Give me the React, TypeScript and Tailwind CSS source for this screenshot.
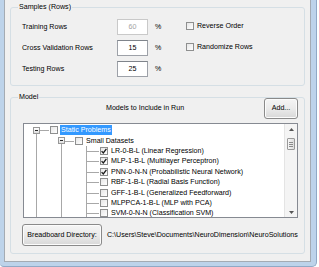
import type { ReactNode } from "react";

type TreeRow = {
  level: number;
  label: string;
  kind: "root" | "branch" | "leaf";
  checked?: boolean;
  selected?: boolean;
};

const rows: TreeRow[] = [
  { level: 0, label: "Static Problems", kind: "root", selected: true },
  { level: 1, label: "Small Datasets", kind: "branch" },
  { level: 2, label: "LR-0-B-L (Linear Regression)", kind: "leaf", checked: true },
  { level: 2, label: "MLP-1-B-L (Multilayer Perceptron)", kind: "leaf", checked: true },
  { level: 2, label: "PNN-0-N-N (Probabilistic Neural Network)", kind: "leaf", checked: true },
  { level: 2, label: "RBF-1-B-L (Radial Basis Function)", kind: "leaf" },
  { level: 2, label: "GFF-1-B-L (Generalized Feedforward)", kind: "leaf" },
  { level: 2, label: "MLPPCA-1-B-L (MLP with PCA)", kind: "leaf" },
  { level: 2, label: "SVM-0-N-N (Classification SVM)", kind: "leaf" },
];

function Check({ checked }: { checked?: boolean }) {
  return (
    <div className="w-[8px] h-[8px] shrink-0 border border-[#8e8f8f] bg-linear-to-br from-[#e6e6e6] to-white flex items-center justify-center">
      {checked && (
        <svg width="6" height="6" viewBox="0 0 6 6">
          <path d="M0.6 3.1 L2.3 4.9 L5.4 0.8" fill="none" stroke="#1c1c1c" strokeWidth="1.3" />
        </svg>
      )}
    </div>
  );
}

function Cell({
  up,
  down,
  across,
  expander,
}: {
  up?: boolean;
  down?: boolean;
  across?: boolean;
  expander?: boolean;
}) {
  return (
    <div className="relative w-[25px] h-full shrink-0">
      {up && <div className="absolute left-[12px] top-0 h-1/2 border-l border-[#a8a8a8]" />}
      {down && <div className="absolute left-[12px] top-1/2 bottom-0 border-l border-[#a8a8a8]" />}
      {across && <div className="absolute left-[12px] right-0 top-1/2 border-t border-[#a8a8a8]" />}
      {expander && (
        <div className="absolute left-[9px] top-1/2 -mt-[3.5px] w-[7px] h-[7px] border border-[#979797] bg-linear-to-b from-white to-[#dedede] flex items-center justify-center">
          <div className="w-[3px] border-t border-[#2a2a2a]" />
        </div>
      )}
    </div>
  );
}

function Row({ row }: { row: TreeRow }) {
  let cells: ReactNode;
  if (row.kind === "root") {
    cells = <Cell down across expander />;
  } else if (row.kind === "branch") {
    cells = (
      <>
        <Cell up down />
        <Cell down across expander />
      </>
    );
  } else {
    cells = (
      <>
        <Cell up down />
        <Cell up down />
        <Cell up down across />
      </>
    );
  }
  return (
    <div className="flex items-center h-[10.4px] whitespace-nowrap">
      {cells}
      <div className="ml-[1px]">
        <Check checked={row.checked} />
      </div>
      <span
        className={
          row.selected
            ? "ml-[2px] px-[1px] leading-[10px] bg-[#3399ff] text-white"
            : "ml-[2px] px-[1px] leading-[10px] text-black"
        }
      >
        {row.label}
      </span>
    </div>
  );
}

function Button({ children, className }: { children: ReactNode; className: string }) {
  return (
    <div
      className={
        "flex items-center justify-center rounded-[3px] border border-[#8a8a8a] bg-linear-to-b from-[#f5f5f5] via-[#ebebeb] to-[#d8d8d8] shadow-[inset_0_0_0_1px_#fcfcfc] text-black " +
        className
      }
    >
      {children}
    </div>
  );
}

function Field({ value, disabled }: { value: string; disabled?: boolean }) {
  return (
    <div
      className={
        disabled
          ? "w-[31px] h-[16px] border border-[#c9c9c9] bg-white flex items-center justify-center text-[#a3a3a3]"
          : "w-[31px] h-[16px] border border-[#9da1a8] border-t-[#7f848b] bg-white flex items-center justify-center text-black"
      }
    >
      {value}
    </div>
  );
}

export default function App() {
  return (
    <div className="w-[319px] h-[267px] bg-white overflow-hidden font-['Liberation_Sans',Arial,sans-serif] text-[7.1px] text-black">
      <div className="w-[317px] h-[267px] bg-[#bdd3ea] pl-[4px] pr-[5px] pb-[4px] border-r border-b border-[#8fa9c6] rounded-br-[5px] rounded-bl-[4px]">
        <div className="h-full bg-[#f0f0f0] border-l border-r border-b border-[#a4abb3] px-[5px]">
          {/* Samples */}
          <fieldset className="h-[86px] border border-[#d5dfe5] rounded-[3px] px-0 pt-[5px]">
            <legend className="ml-[7px] px-[1px] leading-[14px]">Samples (Rows)</legend>
            <div className="flex pl-[11px]">
              <div className="flex flex-col gap-[5px]">
                {[
                  ["Training Rows", "60", true],
                  ["Cross Validation Rows", "15", false],
                  ["Testing Rows", "25", false],
                ].map(([label, value, disabled]) => (
                  <div key={label as string} className="flex items-center h-[16px]">
                    <span className="w-[95px]">{label}</span>
                    <Field value={value as string} disabled={disabled as boolean} />
                    <span className="w-[38px] pl-[7px]">%</span>
                  </div>
                ))}
              </div>
              <div className="flex flex-col gap-[5px] -mt-[1px]">
                <label className="flex items-center gap-[3px] h-[16px]">
                  <Check />
                  <span>Reverse Order</span>
                </label>
                <label className="flex items-center gap-[3px] h-[16px]">
                  <Check />
                  <span>Randomize Rows</span>
                </label>
              </div>
            </div>
          </fieldset>

          {/* Model */}
          <fieldset className="mt-[4px] h-[164px] border border-[#d5dfe5] rounded-[3px] px-0">
            <legend className="ml-[7px] px-[1px] leading-[14px]">Model</legend>
            <div className="-mt-[6px] flex items-center h-[21px] pr-[6px]">
              <span className="ml-[95px] flex-1">Models to Include in Run</span>
              <Button className="w-[34px] h-[21px]">Add...</Button>
            </div>

            <div className="mt-[4px] ml-[12px] mr-[6px] h-[95px] border border-[#868a92] bg-white flex">
              <div className="flex-1 overflow-hidden pt-[1px]">
                {rows.map((r) => (
                  <Row key={r.label} row={r} />
                ))}
              </div>
              <div className="w-[13px] bg-[#f4f4f4] border-l border-[#e4e4e4] flex flex-col items-center">
                <div className="h-[10px] flex items-center justify-center">
                  <svg width="5" height="3" viewBox="0 0 5 3">
                    <path d="M0 3 L2.5 0 L5 3 Z" fill="#555" />
                  </svg>
                </div>
                <div className="mt-[4px] w-[8px] h-[12px] rounded-[1px] border border-[#999] bg-linear-to-r from-[#f7f7f7] to-[#dcdcdc] flex flex-col items-center justify-center gap-[1px]">
                  <div className="w-[4px] border-t border-[#8a8a8a]" />
                  <div className="w-[4px] border-t border-[#8a8a8a]" />
                  <div className="w-[4px] border-t border-[#8a8a8a]" />
                </div>
                <div className="flex-1" />
                <div className="h-[10px] flex items-center justify-center">
                  <svg width="5" height="3" viewBox="0 0 5 3">
                    <path d="M0 0 L2.5 3 L5 0 Z" fill="#555" />
                  </svg>
                </div>
              </div>
            </div>

            <div className="mt-[6px] ml-[11px] flex items-center">
              <Button className="w-[80px] h-[22px]">Breadboard Directory:</Button>
              <span className="ml-[5px] whitespace-nowrap">
                C:\Users\Steve\Documents\NeuroDimension\NeuroSolutions
              </span>
            </div>
          </fieldset>
        </div>
      </div>
    </div>
  );
}
